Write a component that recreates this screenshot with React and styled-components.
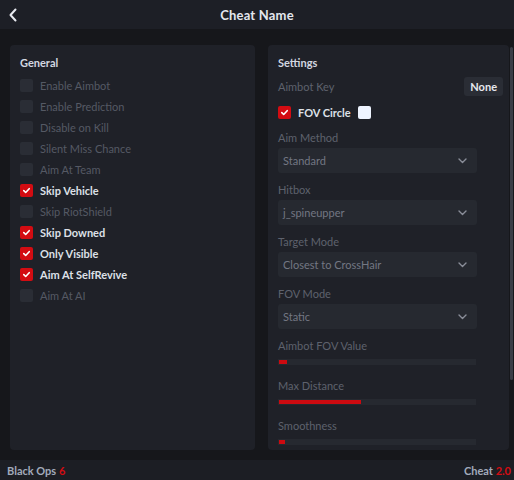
import React from 'react'
import styled, { createGlobalStyle } from 'styled-components'

const Global = createGlobalStyle`
  html, body { margin: 0; padding: 0; background: #16171b; }
  body { font-family: "Lato", "Open Sans", sans-serif; -webkit-font-smoothing: antialiased; }
  * { box-sizing: border-box; }
`

const Page = styled.div`
  width: 514px;
  height: 480px;
  display: flex;
  flex-direction: column;
  background: #16171b;
  overflow: hidden;
`

const Header = styled.header`
  height: 29px;
  flex: none;
  background: #1d1f26;
  display: flex;
  align-items: center;
  justify-content: center;
  position: relative;
  h1 {
    margin: 0;
    font-size: 13px;
    font-weight: 700;
    color: #e4e7ee;
    letter-spacing: 0.2px;
  }
`

const Back = styled.button`
  position: absolute;
  left: 8px;
  top: 8px;
  width: 12px;
  height: 14px;
  padding: 0;
  border: 0;
  background: none;
  display: flex;
`

const Main = styled.main`
  flex: 1;
  display: flex;
  padding: 16px 1px 10px 10px;
  min-height: 0;
`

const Panel = styled.section`
  width: ${p => p.$w ? p.$w + 'px' : 'auto'};
  flex: ${p => p.$w ? 'none' : '1'};
  background: #1f2128;
  border-radius: 4px;
  padding: 11px ${p => p.$pr || 10}px 0 10px;
  margin-right: ${p => p.$mr || 0}px;
  overflow: hidden;
`

const Heading = styled.h2`
  margin: 0 0 5px;
  font-size: 11px;
  line-height: 14px;
  font-weight: 700;
  color: #d3d7e0;
`

const Scroll = styled.div`
  width: 3px;
  margin-left: 1px;
  margin-top: 2px;
  height: 333px;
  border-radius: 2px;
  background: #3a3d46;
`

const Row = styled.label`
  display: flex;
  align-items: center;
  gap: 7px;
  height: 21px;
  font-size: 11px;
  font-weight: ${p => p.$on ? 700 : 400};
  color: ${p => p.$on ? '#dde0e7' : '#555964'};
`

const Box = styled.span`
  width: 13px;
  height: 13px;
  flex: none;
  border-radius: 2px;
  background: ${p => p.$on ? '#d30c12' : '#2a2d35'};
  display: flex;
  align-items: center;
  justify-content: center;
`

const Check = ({ on }) => (
  <Box $on={on}>
    {on && (
      <svg width="9" height="9" viewBox="0 0 10 10">
        <path d="M2 5.2 L4.1 7.2 L8 3" fill="none" stroke="#fff" strokeWidth="1.8" strokeLinecap="round" strokeLinejoin="round" />
      </svg>
    )}
  </Box>
)

const KeyRow = styled.div`
  display: flex;
  align-items: center;
  justify-content: space-between;
  height: 21px;
  margin-top: 6px;
`

const Label = styled.div`
  font-size: 11px;
  line-height: 14px;
  color: #5e626d;
`

const KeyBtn = styled.div`
  height: 19px;
  padding: 0 6px;
  border-radius: 3px;
  background: #2a2d35;
  color: #e6e8ee;
  font-size: 11px;
  font-weight: 700;
  display: flex;
  align-items: center;
`

const FovRow = styled(Row)`
  margin-top: 6px;
  height: 18px;
  margin-bottom: 10px;
`

const Swatch = styled.span`
  width: 13px;
  height: 13px;
  border-radius: 2px;
  background: ${p => p.$c};
`

const Group = styled.div`
  margin-bottom: 10px;
  width: 199px;
`

const Select = styled.div`
  margin-top: 3px;
  height: 25px;
  border-radius: 3px;
  background: #262930;
  display: flex;
  align-items: center;
  justify-content: space-between;
  padding: 0 10px 0 5px;
  font-size: 11px;
  color: #737783;
`

const SliderBox = styled.div`
  width: 198px;
  margin-bottom: 14px;
  &:first-of-type { margin-top: -1px; }
`

const Track = styled.div`
  margin-top: 6px;
  height: 6px;
  background: #262930;
  padding: 1px 0 1px 1px;
`

const Fill = styled.div`
  height: 4px;
  background: #cc0a10;
`

const Footer = styled.footer`
  height: 20px;
  flex: none;
  background: #1c1e24;
  display: flex;
  align-items: center;
  justify-content: space-between;
  padding: 0 3px 0 7px;
  font-size: 11px;
  font-weight: 700;
  color: #a2aabb;
  span { color: #d30c12; }
`

const general = [
  ['Enable Aimbot', false],
  ['Enable Prediction', false],
  ['Disable on Kill', false],
  ['Silent Miss Chance', false],
  ['Aim At Team', false],
  ['Skip Vehicle', true],
  ['Skip RiotShield', false],
  ['Skip Downed', true],
  ['Only Visible', true],
  ['Aim At SelfRevive', true],
  ['Aim At AI', false],
]

const selects = [
  ['Aim Method', 'Standard'],
  ['Hitbox', 'j_spineupper'],
  ['Target Mode', 'Closest to CrossHair'],
  ['FOV Mode', 'Static'],
]

const sliders = [
  ['Aimbot FOV Value', 8],
  ['Max Distance', 82],
  ['Smoothness', 6],
]

const Chevron = () => (
  <svg width="9" height="6" viewBox="0 0 9 6">
    <path d="M1 1 L4.5 4.5 L8 1" fill="none" stroke="#8a8e99" strokeWidth="1.4" strokeLinecap="round" strokeLinejoin="round" />
  </svg>
)

export default function App() {
  return (
    <Page>
      <Global />
      <Header>
        <Back>
          <svg width="10" height="14" viewBox="0 0 10 14">
            <path d="M7.5 1.5 L2.5 7 L7.5 12.5" fill="none" stroke="#e8eaf0" strokeWidth="2" strokeLinecap="round" strokeLinejoin="round" />
          </svg>
        </Back>
        <h1>Cheat Name</h1>
      </Header>
      <Main>
        <Panel $w={245} $mr={13}>
          <Heading>General</Heading>
          {general.map(([name, on]) => (
            <Row key={name} $on={on}>
              <Check on={on} />
              {name}
            </Row>
          ))}
        </Panel>
        <Panel $pr={6}>
          <Heading>Settings</Heading>
          <KeyRow>
            <Label>Aimbot Key</Label>
            <KeyBtn>None</KeyBtn>
          </KeyRow>
          <FovRow $on>
            <Check on />
            FOV Circle
            <Swatch $c="#eef4ff" />
          </FovRow>
          {selects.map(([label, value]) => (
            <Group key={label}>
              <Label>{label}</Label>
              <Select>
                {value}
                <Chevron />
              </Select>
            </Group>
          ))}
          {sliders.map(([label, w]) => (
            <SliderBox key={label}>
              <Label>{label}</Label>
              <Track>
                <Fill style={{ width: w }} />
              </Track>
            </SliderBox>
          ))}
        </Panel>
        <Scroll />
      </Main>
      <Footer>
        <div>Black Ops <span>6</span></div>
        <div>Cheat <span>2.0</span></div>
      </Footer>
    </Page>
  )
}
